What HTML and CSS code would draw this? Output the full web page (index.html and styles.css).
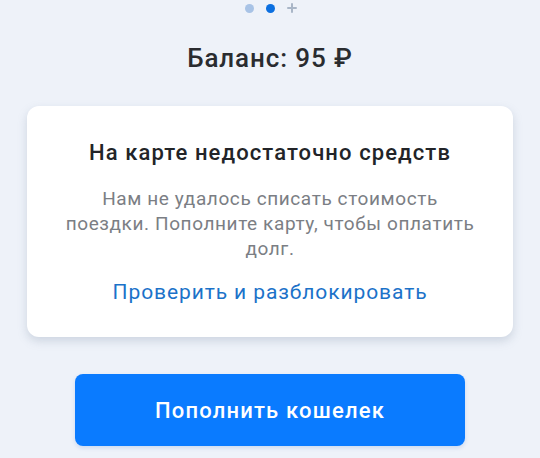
FILE: index.html
```html
<!DOCTYPE html>
<html lang="ru">
<head>
<meta charset="utf-8">
<link rel="stylesheet" href="styles.css">
</head>
<body>
<div class="screen">
  <div class="pager">
    <span class="dot dot-light"></span>
    <span class="dot dot-active"></span>
    <svg class="plus" width="10" height="10" viewBox="0 0 10 10"><path d="M5 1v8M1 5h8" stroke="#a9b6c7" stroke-width="2" stroke-linecap="round"/></svg>
  </div>
  <h1 class="balance">Баланс: 95 ₽</h1>
  <div class="card">
    <h2 class="card-title">На карте недостаточно средств</h2>
    <p class="card-text">Нам не удалось списать стоимость<br>поездки. Пополните карту, чтобы оплатить долг.</p>
    <a class="card-link" href="#">Проверить и разблокировать</a>
  </div>
  <button class="btn">Пополнить кошелек</button>
</div>
</body>
</html>
```
FILE: styles.css
```css
html, body {
  margin: 0;
  padding: 0;
  background: #eef2f9;
  font-family: Roboto, "Noto Sans", sans-serif;
}
.screen {
  width: 540px;
  height: 458px;
  overflow: hidden;
  display: flex;
  flex-direction: column;
  align-items: center;
}
.pager {
  display: flex;
  align-items: center;
  gap: 12px;
  height: 16px;
  margin-left: 2px;
}
.dot {
  width: 9px;
  height: 9px;
  border-radius: 50%;
}
.dot-light { background: #a8c3e6; }
.dot-active { background: #0b6fe0; }
.balance {
  margin: 25px 0 0;
  font-size: 26px;
  letter-spacing: 0.9px;
  line-height: 34px;
  font-weight: 500;
  color: #2a2c30;
}
.card {
  box-sizing: border-box;
  width: 486px;
  margin-top: 31px;
  background: #fff;
  border-radius: 12px;
  box-shadow: 0 4px 10px rgba(120, 135, 160, 0.28);
  padding: 33px 24px 32px;
  display: flex;
  flex-direction: column;
  align-items: center;
  text-align: center;
}
.card-title {
  margin: 0;
  font-size: 22px;
  letter-spacing: 1.1px;
  line-height: 28px;
  font-weight: 500;
  color: #222428;
}
.card-text {
  margin: 19px 0 0;
  font-size: 19px;
  letter-spacing: 0.6px;
  line-height: 25px;
  color: #7b7e84;
  width: 438px;
}
.card-link {
  margin-top: 18px;
  font-size: 21px;
  letter-spacing: 0.9px;
  line-height: 26px;
  color: #1b72c9;
  text-decoration: none;
}
.btn {
  margin-top: 37px;
  width: 390px;
  height: 72px;
  border: 0;
  border-radius: 8px;
  background: #0a7bff;
  color: #fff;
  font-family: Roboto, "Noto Sans", sans-serif;
  font-size: 22px;
  letter-spacing: 1.2px;
  font-weight: 500;
  box-shadow: 0 2px 4px rgba(0, 80, 200, 0.15);
}
```
